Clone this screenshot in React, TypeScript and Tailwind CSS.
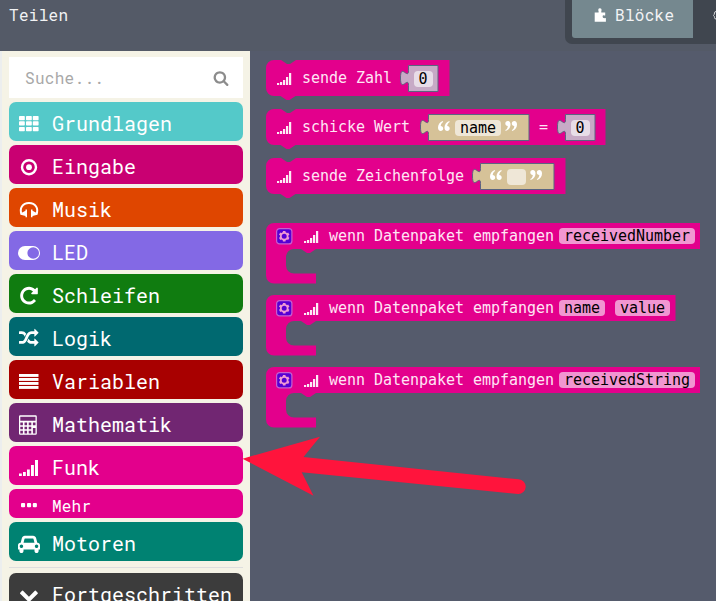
import type { ReactNode } from 'react';

const PINK = '#e3008c';

/* ---------- toolbox icons, drawn in a 24x39 row-high box ---------- */

function RowIcon({ children }: { children: ReactNode }) {
  return (
    <svg className="h-[39px] w-6 shrink-0" viewBox="0 0 24 39" fill="#fff">
      {children}
    </svg>
  );
}

const GridIcon = () => (
  <RowIcon>
    {[14, 19.3, 25].map((y) =>
      [2, 9, 15.8].map((x) => <rect key={`${x}-${y}`} x={x} y={y} width="5.8" height="4.2" rx="0.7" />),
    )}
  </RowIcon>
);

const TargetIcon = () => (
  <RowIcon>
    <circle cx="12" cy="22.2" r="7" fill="none" stroke="#fff" strokeWidth="2.4" />
    <circle cx="12" cy="22.2" r="2.9" />
  </RowIcon>
);

const HeadphonesIcon = () => (
  <RowIcon>
    <path d="M4.700 26.500C2 20.500 5.500 15 12 15s10 5.500 7.300 11.500" fill="none" stroke="#fff" strokeWidth="2" />
    <path d="M8.500 21.500h1.500v7.700H8.500v-1.200L3.800 26.800v-1.500l4.700-2.500zM15.500 21.500h-1.500v7.700h1.500v-1.200l4.700-1.200v-1.500l-4.700-2.500z" />
  </RowIcon>
);

const ToggleIcon = () => (
  <RowIcon>
    <rect x="1" y="15" width="22" height="14" rx="7" />
    <circle cx="16.200" cy="22" r="5.800" fill="#8369e5" />
  </RowIcon>
);

const RepeatIcon = () => (
  <RowIcon>
    <g transform="translate(1.700 11.400) scale(0.0115)">
      <path d="M1664 256v448q0 26-19 45t-45 19h-448q-42 0-59-40-17-39 14-69l138-138q-148-137-349-137-104 0-198.500 40.500t-163.500 109.500-109.500 163.500-40.500 198.500 40.500 198.500 109.500 163.500 163.500 109.500 198.500 40.500q119 0 225-52t179-147q7-10 23-12 15 0 25 9l137 138q9 8 9.500 20.500t-7.500 22.500q-109 132-264 204.500t-327 72.500q-156 0-298-61t-245-164-164-245-61-298 61-298 164-245 245-164 298-61q147 0 284.500 55.500t244.500 156.500l130-129q29-31 70-14 39 17 39 59z" />
    </g>
  </RowIcon>
);

const RandomIcon = () => (
  <RowIcon>
    <g transform="translate(2 11.500) scale(0.0109)">
      <path d="M666 481q-60 92-137 273-22-45-37-72.500t-40.500-63.500-51-56.500-63-35-81.500-14.500h-224q-14 0-23-9t-9-23v-192q0-14 9-23t23-9h224q250 0 410 225zm1126 799q0 14-9 23l-320 320q-9 9-23 9-13 0-22.500-9.500t-9.500-22.500v-192q-32 0-85 .5t-81 1-73-1-71-5-64-10.500-63-18.500-58-28.500-59-40-55-53.500-56-69.500q59-93 136-273 22 45 37 72.500t40.500 63.500 51 56.500 63 35 81.500 14.500h256v-192q0-14 9-23t23-9q12 0 24 10l319 319q9 9 9 23zm0-896q0 14-9 23l-320 320q-9 9-23 9-13 0-22.500-9.500t-9.500-22.500v-192h-256q-48 0-87 15t-69 45-51 61.500-45 77.500q-32 62-78 171-29 66-49.500 111t-54 105-64 100-74 83-90 68.500-106.500 42-128 16.500h-224q-14 0-23-9t-9-23v-192q0-14 9-23t23-9h224q48 0 87-15t69-45 51-61.500 45-77.500q32-62 78-171 29-66 49.500-111t54-105 64-100 74-83 90-68.500 106.500-42 128-16.500h256v-192q0-14 9-23t23-9q12 0 24 10l319 319q9 9 9 23z" />
    </g>
  </RowIcon>
);

const LinesIcon = () => (
  <RowIcon>
    {[14, 18, 22, 26].map((y) => (
      <rect key={y} x="2" y={y} width="19.500" height="2.900" />
    ))}
  </RowIcon>
);

const CalculatorIcon = () => (
  <RowIcon>
    <path
      fillRule="evenodd"
      d="M3.200 12.300h15.400q1.200 0 1.200 1.200v17q0 1.200-1.200 1.200H3.200Q2 31.700 2 30.500v-17q0-1.200 1.200-1.200zM3.300 13.700v4h15.200v-4zM3.300 19.600v2.600h2.600v-2.600zM7.500 19.600v2.600h2.600v-2.600zM11.700 19.600v2.600h2.600v-2.600zM15.900 19.600v2.600h2.600v-2.600zM3.300 23.700v2.600h2.600v-2.600zM7.500 23.700v2.600h2.600v-2.600zM11.700 23.700v2.600h2.600v-2.600zM3.300 27.800v2.600h2.600v-2.600zM7.500 27.800v2.600h2.600v-2.600zM11.700 27.800v2.600h2.600v-2.600zM15.900 25v5.400h2.600V25z"
    />
  </RowIcon>
);

const SignalIcon = () => (
  <RowIcon>
    <rect x="2" y="27.500" width="2.800" height="2.500" />
    <rect x="6" y="26" width="2.800" height="4" />
    <rect x="10" y="23.500" width="2.800" height="6.500" />
    <rect x="14" y="19" width="2.900" height="11" />
    <rect x="18" y="14" width="3" height="16" />
  </RowIcon>
);

const DotsIcon = () => (
  <svg className="h-[29px] w-6 shrink-0" viewBox="0 0 24 29" fill="#fff">
    {[4, 10, 15.800].map((x) => (
      <rect key={x} x={x} y="14.100" width="4.100" height="4.100" rx="1" />
    ))}
  </svg>
);

const CarIcon = () => (
  <RowIcon>
    <g transform="translate(1 12.500) scale(0.01074)">
      <path d="M480 1088q0-66-47-113t-113-47-113 47-47 113 47 113 113 47 113-47 47-113zm36-320h1016l-89-357q-2-8-14-17.500t-21-9.500h-768q-9 0-21 9.500t-14 17.500zm1372 320q0-66-47-113t-113-47-113 47-47 113 47 113 113 47 113-47 47-113zm160-96v384q0 14-9 23t-23 9h-96v128q0 80-56 136t-136 56-136-56-56-136v-128h-1024v128q0 80-56 136t-136 56-136-56-56-136v-128h-96q-14 0-23-9t-9-23v-384q0-93 65.500-158.500t158.500-65.500h28l105-419q23-94 104-157.500t179-63.500h768q98 0 179 63.500t104 157.500l105 419h28q93 0 158.500 65.500t65.500 158.500z" />
    </g>
  </RowIcon>
);

const ChevronIcon = () => (
  <RowIcon>
    <g transform="translate(2 11.700) scale(0.0111)">
      <path d="M1683 808l-742 741q-19 19-45 19t-45-19l-742-741q-19-19-19-45.500t19-45.500l166-165q19-19 45-19t45 19l531 531 531-531q19-19 45-19t45 19l166 165q19 19 19 45.500t-19 45.500z" />
    </g>
  </RowIcon>
);

const SearchIcon = () => (
  <svg className="h-4 w-4" viewBox="0 0 1792 1792" fill="#8c8c8c">
    <path d="M1216 832q0-185-131.500-316.500t-316.500-131.500-316.500 131.500-131.500 316.500 131.500 316.500 316.500 131.500 316.500-131.500 131.500-316.500zm512 832q0 52-38 90t-90 38q-54 0-90-38l-343-342q-179 124-399 124-143 0-273.500-55.500t-225-150-150-225-55.500-273.500 55.500-273.500 150-225 225-150 273.500-55.500 273.500 55.500 225 150 150 225 55.500 273.500q0 220-124 399l343 343q37 37 37 90z" />
  </svg>
);

/* ---------- toolbox ---------- */

const categories = [
  { name: 'Grundlagen', color: 'bg-[#54c9c9]', Icon: GridIcon },
  { name: 'Eingabe', color: 'bg-[#c90072]', Icon: TargetIcon },
  { name: 'Musik', color: 'bg-[#df4600]', Icon: HeadphonesIcon },
  { name: 'LED', color: 'bg-[#8369e5]', Icon: ToggleIcon },
  { name: 'Schleifen', color: 'bg-[#107c10]', Icon: RepeatIcon },
  { name: 'Logik', color: 'bg-[#006970]', Icon: RandomIcon },
  { name: 'Variablen', color: 'bg-[#a80000]', Icon: LinesIcon },
  { name: 'Mathematik', color: 'bg-[#712672]', Icon: CalculatorIcon },
  { name: 'Funk', color: 'bg-[#e3008c]', Icon: SignalIcon },
];

function Category({ name, color, Icon }: { name: string; color: string; Icon: () => ReactNode }) {
  return (
    <div className={`flex h-[39px] shrink-0 gap-[11px] rounded-[7px] pl-2 text-[20px] leading-[42px] text-white ${color}`}>
      <Icon />
      <span className="whitespace-nowrap">{name}</span>
    </div>
  );
}

function Toolbox() {
  return (
    <aside className="flex w-[250px] shrink-0 flex-col gap-1 border-l-2 border-[#eceeee] bg-[#f5f3e6] pt-1.5 pr-[7px] pl-[7px] font-['Roboto_Mono','DejaVu_Sans_Mono',monospace]">
      <div className="flex h-[41px] shrink-0 items-center justify-between bg-white pr-[14px] pl-4 text-[16px] tracking-[0.3px] text-[#a8a8a8]">
        <span>Suche...</span>
        <SearchIcon />
      </div>
      {categories.map((c) => (
        <Category key={c.name} {...c} />
      ))}
      <div className="flex h-[29px] shrink-0 gap-[11px] rounded-[7px] bg-[#e3008c] pl-2 text-[16px] leading-[34px] tracking-[0.2px] text-white">
        <DotsIcon />
        <span>Mehr</span>
      </div>
      <Category name="Motoren" color="bg-[#008272]" Icon={CarIcon} />
      <div className="mt-0.5 mb-[1px] h-px shrink-0 bg-[#dedede]" />
      <Category name="Fortgeschritten" color="bg-[#3c3c3c]" Icon={ChevronIcon} />
    </aside>
  );
}

/* ---------- blocks ---------- */

function BlockSignal() {
  return (
    <svg className="h-3 w-[15px] shrink-0" viewBox="0 0 15 12" fill="#fff" fillOpacity="0.92">
      <rect x="0" y="10" width="2.200" height="2" />
      <rect x="3" y="9" width="2.200" height="3" />
      <rect x="6" y="7" width="2.200" height="5" />
      <rect x="9" y="4" width="2.200" height="8" />
      <rect x="12" y="0" width="2.200" height="12" />
    </svg>
  );
}

function Statement({ width, children }: { width: number; children: ReactNode }) {
  return (
    <div className="relative flex h-9 items-center pl-[11px]" style={{ width }}>
      <svg className="absolute top-0 left-0 overflow-visible" width={width} height="36" fill={PINK}>
        <path d={`M0 8A8 8 0 0 1 8 0H15l6 4h3l6-4H${width}V36H29.500l-6 4h-3l-6-4H8a8 8 0 0 1-8-8z`} />
      </svg>
      <div className="relative flex items-center whitespace-pre">{children}</div>
    </div>
  );
}

function Value({ width, fill, children }: { width: number; fill: string; children: ReactNode }) {
  return (
    <div className="relative flex h-[26px] items-center justify-center" style={{ width }}>
      <svg className="absolute top-0 left-0 overflow-visible" width={width} height="26" fill={fill} stroke="#5b6580">
        <path d={`M${width} .5H.5V5.500c0 10-8-8-8 7.500s8-2.500 8 7.500V26.500H${width}z`} />
      </svg>
      <div className="relative flex items-center">{children}</div>
    </div>
  );
}

const NumberValue = () => (
  <Value width={30} fill="#c7aac6">
    <span className="mt-0.5 flex h-4 w-[19px] items-center justify-center rounded-[4px] bg-[#e8dde8] text-black">0</span>
  </Value>
);

function Quote({ flip }: { flip?: boolean }) {
  return (
    <svg className="mb-0.5 h-[10px] w-3" viewBox="0 0 12 10" fill="#fff">
      <g transform={flip ? 'rotate(180 6 5)' : undefined}>
        <path d="M4.800 0C1.800 1 0 3.600 0 6.600 0 8.600 1 10 2.700 10 4.200 10 5.200 9 5.200 7.500 5.200 6 4.200 5.100 2.700 5.100 2.800 3.200 3.600 1.900 5.200.9z" />
        <path d="M11.300 0C8.300 1 6.500 3.600 6.500 6.600c0 2 1 3.400 2.700 3.400 1.500 0 2.500-1 2.500-2.500 0-1.500-1-2.400-2.500-2.400.1-1.900.9-3.200 2.500-4.200z" />
      </g>
    </svg>
  );
}

function TextValue({ width, text }: { width: number; text: string }) {
  return (
    <Value width={width} fill="#d6c298">
      <div className="mr-[2px] flex items-center">
        <Quote />
        <span
          className={`mr-1 ml-[5px] mt-0.5 flex h-4 items-center justify-center rounded-[4px] bg-[#efe7d7] text-black ${text ? 'w-[46px]' : 'w-[19px]'}`}
        >
          {text}
        </span>
        <Quote flip />
      </div>
    </Value>
  );
}

function Gear() {
  return (
    <svg className="h-[17px] w-[17px] shrink-0" viewBox="0 0 17 17">
      <rect x="0.600" y="0.600" width="15.300" height="15.300" rx="3" fill="#5500d4" stroke="#c65fd0" strokeWidth="1.200" />
      <g stroke="#f19ad3" strokeWidth="2.600">
        <path d="M8.200 2.900v10.600M3.600 5.550l9.200 5.300M12.800 5.550l-9.200 5.300" />
      </g>
      <circle cx="8.200" cy="8.200" r="3.400" fill="#5500d4" stroke="#f19ad3" strokeWidth="1.800" />
    </svg>
  );
}

function EventBlock({ width, params }: { width: number; params: string[] }) {
  return (
    <div className="relative h-[60.500px]" style={{ width }}>
      <svg className="absolute top-0 left-0" width={width} height="61" fill={PINK}>
        <path
          d={`M0 8A8 8 0 0 1 8 0H${width}V26H50l-6 4h-3l-6-4H28a8 8 0 0 0-8 8V42.500a8 8 0 0 0 8 8H50v10H8a8 8 0 0 1-8-8z`}
        />
      </svg>
      <div className="relative flex h-[26px] items-center pl-[10px] whitespace-pre">
        <Gear />
        <span className="mt-px ml-[11px] flex">
          <BlockSignal />
        </span>
        <span className="ml-[10px] w-[230px] tracking-[-0.030px]">wenn Datenpaket empfangen</span>
        <div className="flex gap-[10px]">
          {params.map((p) => (
            <span key={p} className="flex h-4 items-center rounded-[4px] bg-[#f196d1] px-[5px] tracking-[-0.030px] text-black">
              {p}
            </span>
          ))}
        </div>
      </div>
    </div>
  );
}

function Flyout() {
  return (
    <main className="flex flex-1 flex-col bg-[#555b6c] pt-[9px] pl-4 font-['DejaVu_Sans_Mono',monospace] text-[15px] leading-4 text-[#ffe6f5]">
      <div className="flex flex-col gap-[13px]">
        <Statement width={183.500}>
          <span className="mt-0.5 flex">
            <BlockSignal />
          </span>
          <span className="ml-[10px] w-[106px] tracking-[-0.030px]">sende Zahl</span>
          <NumberValue />
        </Statement>
        <Statement width={339.500}>
          <span className="mt-0.5 flex">
            <BlockSignal />
          </span>
          <span className="ml-[10px] w-[126px] tracking-[-0.030px]">schicke Wert</span>
          <TextValue width={101} text="name" />
          <span className="ml-[10px] w-[26px]">=</span>
          <NumberValue />
        </Statement>
        <Statement width={299.500}>
          <span className="mt-0.5 flex">
            <BlockSignal />
          </span>
          <span className="ml-[10px] w-[178px] tracking-[-0.030px]">sende Zeichenfolge</span>
          <TextValue width={74} text="" />
        </Statement>
      </div>
      <div className="mt-[29px] flex flex-col gap-[11.500px]">
        <EventBlock width={434} params={['receivedNumber']} />
        <EventBlock width={409.500} params={['name', 'value']} />
        <EventBlock width={434} params={['receivedString']} />
      </div>
    </main>
  );
}

/* ---------- page ---------- */

function PuzzleIcon() {
  return (
    <svg className="mt-2 h-[14px] w-[14px]" viewBox="0 0 14 14" fill="#fff">
      <path d="M.7 4.500H4.300Q5 4.500 4.600 3.600 3.600 .2 5.900.2T7.300 3.600Q6.900 4.500 7.600 4.500H11.200V7.300Q11 7.800 10.200 7.400 8.600 7 8.600 8.600T10.200 10.300Q11 9.900 11.900 10.300V13.800H.7z" />
    </svg>
  );
}

function Header() {
  return (
    <header className="flex h-[51px] shrink-0 items-start justify-between bg-[#545a67] font-['Roboto_Mono','DejaVu_Sans_Mono',monospace] text-[16px] leading-[30px] tracking-[0.3px] text-[#f2f3f5]">
      <span className="pl-[9px]">Teilen</span>
      <div className="flex h-11 w-[151px] justify-between overflow-hidden rounded-bl-[7px] bg-[#40464f] pl-[7px]">
        <div className="flex h-[38px] w-[121px] gap-[7px] rounded-bl-[3px] bg-[#75888f] pl-[22px]">
          <PuzzleIcon />
          <span>Blöcke</span>
        </div>
        <svg className="h-[31px] w-[3px]" viewBox="0 0 3 31" fill="none" stroke="#d5d7da">
          <path d="M3 11.500Q1.500 11.500 1.500 13T.5 15.500q1 .5 1 2T3 19" />
        </svg>
      </div>
    </header>
  );
}

export default function App() {
  return (
    <div className="relative flex h-[601px] w-[716px] flex-col overflow-hidden">
      <Header />
      <div className="flex min-h-0 flex-1">
        <Toolbox />
        <Flyout />
      </div>
      <svg className="pointer-events-none absolute top-[436px] left-[242px]" width="285" height="60" fill="#ff143c">
        <path d="M.5 22.700L78 .7 61.500 21 276.700 43.300a7.300 7.300 0 0 1-.7 14.700L59.700 36.300 71.500 59.700z" />
      </svg>
    </div>
  );
}
